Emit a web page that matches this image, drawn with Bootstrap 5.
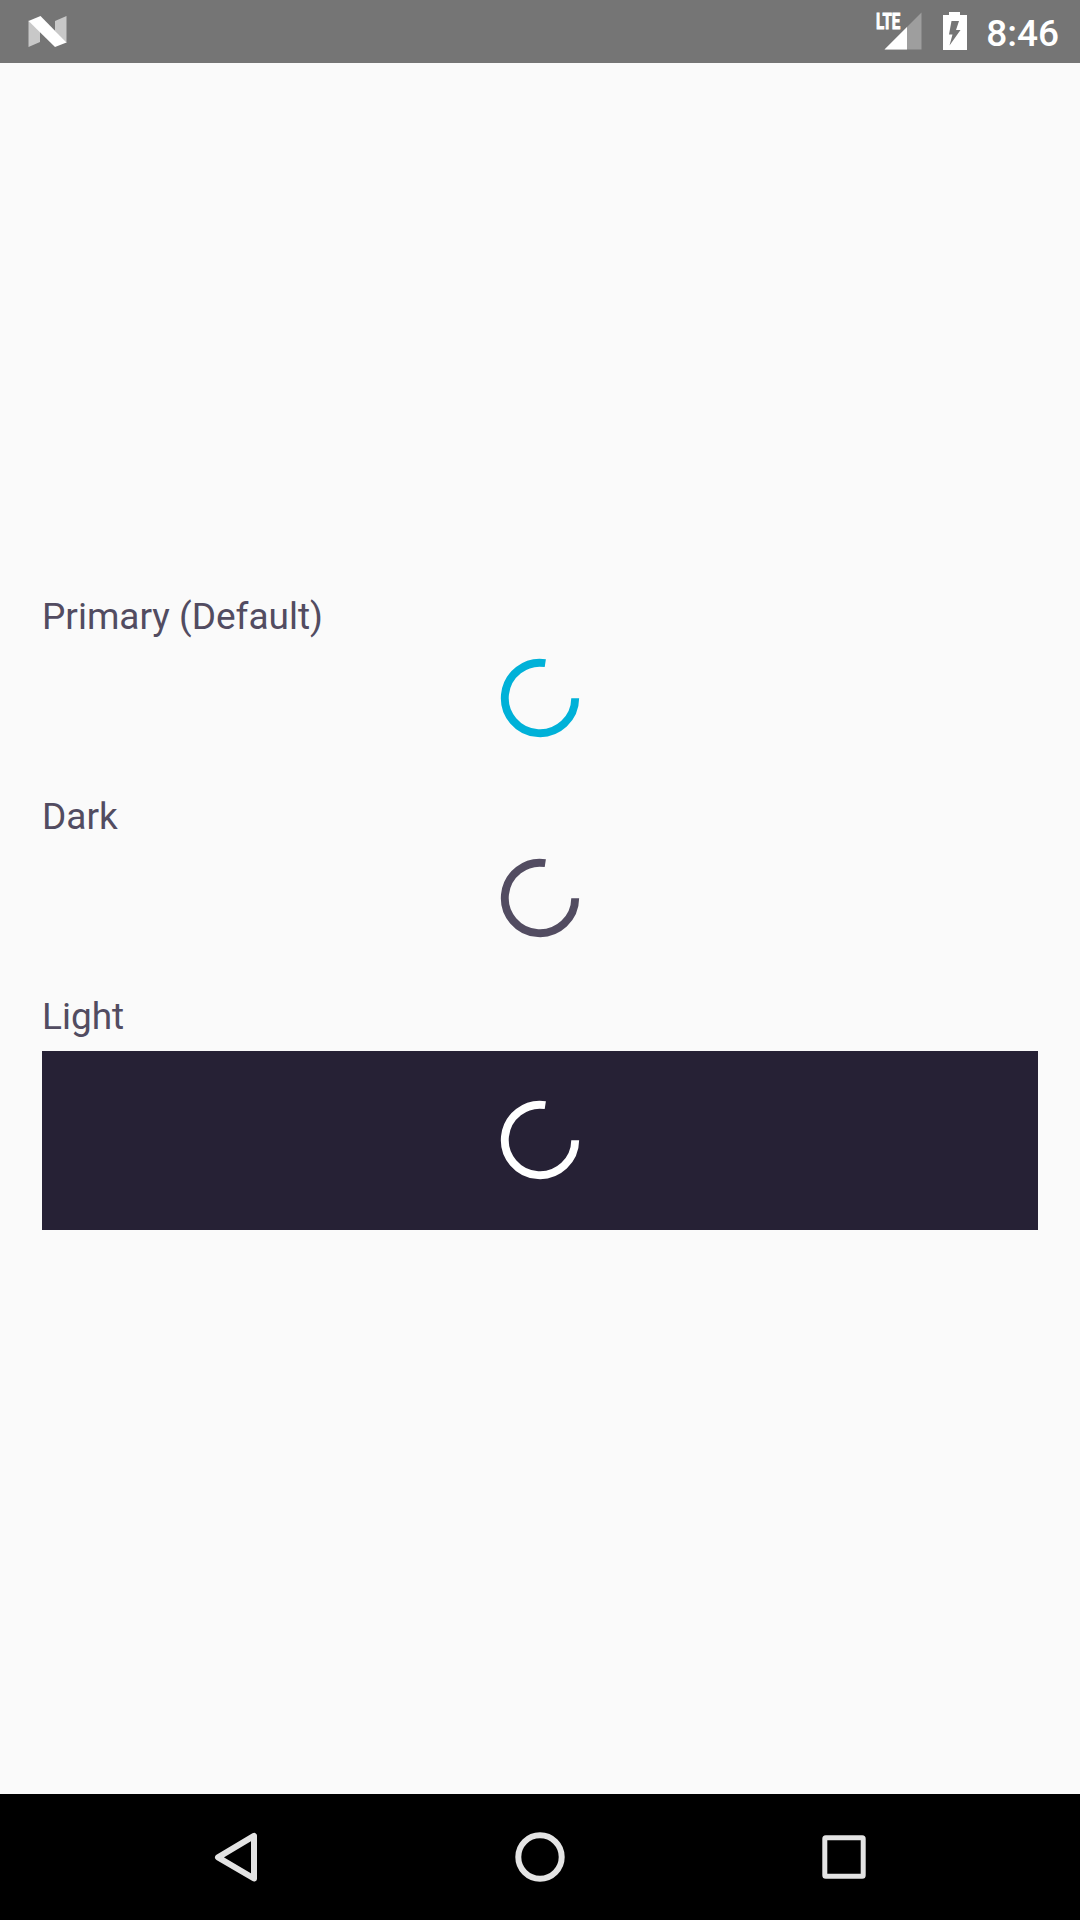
<!DOCTYPE html>
<html lang="en">
<head>
<meta charset="utf-8">
<meta name="viewport" content="width=device-width, initial-scale=1">
<title>Spinners</title>
<link rel="stylesheet" href="https://cdn.jsdelivr.net/npm/bootstrap@5.3.0/dist/css/bootstrap.min.css">
<style>
body { font-family: Roboto, sans-serif; background: #fafafa; color: #524c61; }
svg { display: block; flex: none; }
.status-bar { height: 63px; background: #757575; padding: 0 21px 0 28px; }
.network-type { font: 700 22px Roboto, sans-serif; fill: #fff; stroke: #fff; stroke-width: .9px; }
.clock { font-size: 37px; font-weight: 500; line-height: 63px; padding-top: 3px; margin-left: 18px; }
.screen { padding: 528px 42px 0; }
.demo { margin-bottom: 46px; }
.demo-label { font-size: 37px; line-height: 50px; padding-top: 1px; margin-bottom: 9px; }
.spinner-area { height: 94px; }
.spinner-area.on-dark { height: 179px; padding-bottom: 1px; background: #262135; }
.ring { width: 80px; height: 80px; fill: none; stroke: currentColor; stroke-width: 7.9; }
.ring-primary { color: #00b1d8; }
.ring-dark { color: #524c61; }
.nav-keys { height: 126px; padding: 0 108px; }
.nav-keys svg { fill: none; stroke: #e4e4e4; stroke-width: 6; stroke-linejoin: round; }
</style>
</head>
<body>
<div class="d-flex flex-column vh-100 overflow-hidden">
  <header class="status-bar d-flex align-items-center justify-content-between text-white">
    <svg width="40" height="63" viewBox="28 0 40 63">
      <path fill="#c8c8c8" d="M28.5 20.5 40 31V42L28.5 47zM66.5 16 55 21V31L66.5 43z"/>
      <path fill="#fff" d="M28.5 21 40.5 16 66.5 42.5 55 47z"/>
    </svg>
    <div class="d-flex align-items-center">
      <svg width="92" height="63" viewBox="876 0 92 63">
        <path fill="#9e9e9e" d="M921.5 12.5V49.5H884.5z"/>
        <path fill="#fff" d="M907 27V49.5H884.5z"/>
        <text class="network-type" x="876" y="29" textLength="24.3" lengthAdjust="spacingAndGlyphs">LTE</text>
        <path fill="#fff" fill-rule="evenodd" d="M949 12H960V15H967V50H943V15H949zM951.5 21 949 34.5H952.5L949.5 45.5 960.5 30H956L959 21z"/>
      </svg>
      <span class="clock">8:46</span>
    </div>
  </header>
  <main class="screen flex-grow-1">
    <section class="demo">
      <div class="demo-label">Primary (Default)</div>
      <div class="spinner-area d-flex align-items-center justify-content-center">
        <svg class="ring ring-primary" viewBox="-40 -40 80 80"><path d="M35.2 .3A35.2 35.2 0 1 1 5.3 -34.8"/></svg>
      </div>
    </section>
    <section class="demo">
      <div class="demo-label">Dark</div>
      <div class="spinner-area d-flex align-items-center justify-content-center">
        <svg class="ring ring-dark" viewBox="-40 -40 80 80"><path d="M35.2 .3A35.2 35.2 0 1 1 5.3 -34.8"/></svg>
      </div>
    </section>
    <section>
      <div class="demo-label">Light</div>
      <div class="spinner-area on-dark d-flex align-items-center justify-content-center">
        <svg class="ring text-white" viewBox="-40 -40 80 80"><path d="M35.2 .3A35.2 35.2 0 1 1 5.3 -34.8"/></svg>
      </div>
    </section>
  </main>
  <footer class="nav-keys d-flex align-items-center justify-content-between bg-black">
    <svg width="252" height="126" viewBox="108 0 252 126"><path d="M218 63.3 254 41.8V84.5z"/></svg>
    <svg width="80" height="126" viewBox="500 0 80 126"><circle cx="540" cy="63" r="21.7"/></svg>
    <svg width="252" height="126" viewBox="720 0 252 126"><rect x="824.8" y="43.8" width="38.4" height="38.4" rx="1" stroke-width="5"/></svg>
  </footer>
</div>
<script src="https://cdn.jsdelivr.net/npm/bootstrap@5.3.0/dist/js/bootstrap.bundle.min.js"></script>
</body>
</html>
